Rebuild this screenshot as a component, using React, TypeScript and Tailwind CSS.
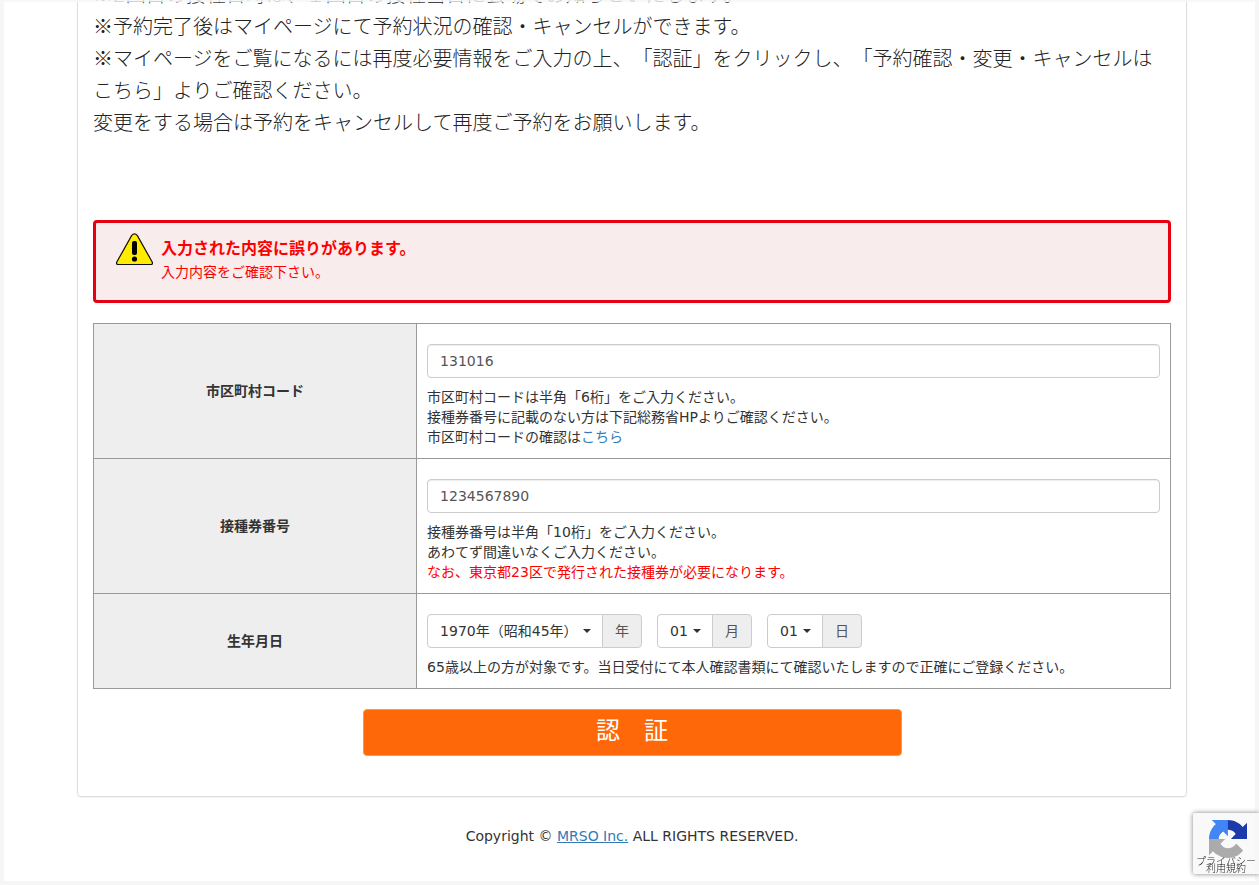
import type { ReactNode } from "react";

const inputClass =
  "mt-[10px] block h-[34px] w-full rounded-[4px] border border-[#ccc] bg-white px-3 text-[#555] shadow-[inset_0_1px_1px_rgba(0,0,0,0.075)] outline-none";

function Row({ label, htmlFor, children }: { label: string; htmlFor: string; children: ReactNode }) {
  return (
    <tr>
      <th scope="row" className="w-[30%] border border-[#999] bg-[#eee] p-[10px] text-center align-middle font-bold">
        <label htmlFor={htmlFor}>{label}</label>
      </th>
      <td className="border border-[#999] p-[10px] align-top">{children}</td>
    </tr>
  );
}

function DateSelect({ id, value, unit, widthClass }: { id: string; value: string; unit: string; widthClass: string }) {
  return (
    <div className="flex h-[34px]">
      <div className={`relative ${widthClass}`}>
        <select
          id={id}
          aria-label={unit}
          className="h-full w-full appearance-none rounded-l-[4px] border border-[#ccc] bg-white pl-3 text-[#333] outline-none"
        >
          <option>{value}</option>
        </select>
        <svg className="pointer-events-none absolute top-[15px] right-[12px] h-1 w-2" viewBox="0 0 8 4" aria-hidden="true">
          <path d="M0 0H8L4 4Z" fill="#333" />
        </svg>
      </div>
      <span className="-ml-px flex w-10 items-center justify-center rounded-r-[4px] border border-[#ccc] bg-[#eee] text-[#555]">
        {unit}
      </span>
    </div>
  );
}

function WarningIcon() {
  return (
    <svg className="h-[33px] w-[39px] shrink-0" viewBox="0 0 39 33" aria-hidden="true">
      <path
        d="M16.6 2.6Q19.5 -0.8 22.4 2.6L37.3 29.2Q38 31.5 35.9 31.5H3.1Q1 31.5 1.7 29.2Z"
        fill="#ffec00"
        stroke="#111"
        strokeWidth="1.2"
      />
      <rect x="17" y="8" width="5" height="14" rx="2" fill="#000" />
      <circle cx="19.5" cy="26" r="2.6" fill="#000" />
    </svg>
  );
}

function RecaptchaBadge() {
  return (
    <aside className="fixed right-0 bottom-[11px] h-[61px] w-[66px] overflow-hidden rounded-l-[2px] bg-[#f9f9f9] shadow-[0_0_5px_#808080]">
      <svg className="mt-[7px] ml-4 h-[38px] w-[38px]" viewBox="0 0 64 64" aria-hidden="true">
        <path
          d="M64 31.955l-.033-1.37V4.687l-7.16 7.16C50.948 4.674 42.033.093 32.05.093c-10.4 0-19.622 4.96-25.458 12.64l11.736 11.86a15.55 15.55 0 0 1 4.754-5.334c2.05-1.6 4.952-2.906 8.968-2.906.485 0 .86.057 1.135.163 4.976.393 9.288 3.14 11.828 7.124l-8.307 8.307L64 31.953"
          fill="#1c3aa9"
        />
        <path
          d="M31.862.094l-1.37.033H4.594l7.16 7.16C4.58 13.147 0 22.06 0 32.046c0 10.4 4.96 19.622 12.64 25.458L24.5 45.768a15.55 15.55 0 0 1-5.334-4.754c-1.6-2.05-2.906-4.952-2.906-8.968 0-.485.057-.86.163-1.135.393-4.976 3.14-9.288 7.124-11.828l8.307 8.307L31.86.095"
          fill="#4285f4"
        />
        <path
          d="M.001 32.045l.033 1.37v25.898l7.16-7.16c5.86 7.173 14.774 11.754 24.76 11.754 10.4 0 19.622-4.96 25.458-12.64l-11.736-11.86a15.55 15.55 0 0 1-4.754 5.334c-2.05 1.6-4.952 2.906-8.968 2.906-.485 0-.86-.057-1.135-.163-4.976-.393-9.288-3.14-11.828-7.124l8.307-8.307c-10.522.04-22.4.066-27.295-.005"
          fill="#ababab"
        />
      </svg>
      <p className="flex flex-col items-center text-[10px] leading-[7px] font-light whitespace-nowrap text-[#222]">
        <a href="#privacy">プライバシー</a>
        <a href="#terms">利用規約</a>
      </p>
      <div className="absolute inset-y-0 right-0 w-1 bg-[#f6f6f6]/80" />
    </aside>
  );
}

export default function App() {
  return (
    <div className="min-h-screen bg-[#f6f6f6] px-1 pb-1 font-['DejaVu_Sans','Noto_Sans_CJK_JP',sans-serif] text-[14px] leading-[20px] text-[#333] [text-spacing-trim:space-all]">
      <div className="fixed inset-x-0 top-0 z-10 h-[2px] bg-[#f6f6f6]/80" />
      <div className="flow-root bg-white pr-[68px] pl-[73px]">
        <main className="-mt-[25px] rounded-[4px] border border-[#ddd] px-[15px] pt-[2px] pb-10 shadow-[0_1px_1px_rgba(0,0,0,0.05)]">
          <div className="font-['Noto_Sans_CJK_JP',sans-serif] text-[20px] leading-[32px] font-light text-[#222]">
            <p className="text-[#444]">
              ※<span className="font-['DejaVu_Sans',sans-serif] leading-none">2</span>
              回目の接種日時は、１回目の接種当日に会場でお知らせいたします。
            </p>
            <p>※予約完了後はマイページにて予約状況の確認・キャンセルができます。</p>
            <p>※マイページをご覧になるには再度必要情報をご入力の上、「認証」をクリックし、「予約確認・変更・キャンセルはこちら」よりご確認ください。</p>
            <p>変更をする場合は予約をキャンセルして再度ご予約をお願いします。</p>
          </div>

          <div
            role="alert"
            className="mt-[82px] flex gap-[7px] rounded-[4px] border-[3px] border-[#e60012] bg-[#f9ecec] px-[19px] pt-[10px] pb-[17px] text-[#f00]"
          >
            <WarningIcon />
            <div className="pt-1">
              <p className="text-[16px] leading-[24px] font-bold">入力された内容に誤りがあります。</p>
              <p className="leading-[22px]">入力内容をご確認下さい。</p>
            </div>
          </div>

          <form onSubmit={(e) => e.preventDefault()}>
            <table className="mt-5 w-full table-fixed border-collapse">
              <tbody>
                <Row label="市区町村コード" htmlFor="city">
                  <input id="city" type="text" defaultValue="131016" className={inputClass} />
                  <p className="mt-[9px] mb-px">
                    市区町村コードは半角「6桁」をご入力ください。
                    <br />
                    接種券番号に記載のない方は下記総務省HPよりご確認ください。
                    <br />
                    市区町村コードの確認は
                    <a href="#code" className="text-[#337ab7]">
                      こちら
                    </a>
                  </p>
                </Row>
                <Row label="接種券番号" htmlFor="ticket">
                  <input id="ticket" type="text" defaultValue="1234567890" className={inputClass} />
                  <p className="mt-[9px] mb-px">
                    接種券番号は半角「10桁」をご入力ください。
                    <br />
                    あわてず間違いなくご入力ください。
                    <br />
                    <span className="text-[#f00]">なお、東京都23区で発行された接種券が必要になります。</span>
                  </p>
                </Row>
                <Row label="生年月日" htmlFor="year">
                  <div className="mt-[10px] flex flex-wrap gap-[15px]">
                    <DateSelect id="year" value="1970年（昭和45年）" unit="年" widthClass="w-[176px]" />
                    <DateSelect id="month" value="01" unit="月" widthClass="w-[56px]" />
                    <DateSelect id="day" value="01" unit="日" widthClass="w-[56px]" />
                  </div>
                  <p className="mt-[9px] mb-px">
                    65歳以上の方が対象です。当日受付にて本人確認書類にて確認いたしますので正確にご登録ください。
                  </p>
                </Row>
              </tbody>
            </table>
            <button
              type="submit"
              className="mx-auto mt-5 block h-[47px] w-1/2 rounded-[4px] border border-[#eea236] bg-[#ff6808] pb-1 text-[24px] leading-[32px] text-white"
            >
              認　証
            </button>
          </form>
        </main>
        <footer className="pt-[29px] pb-[35px] text-center">
          Copyright ©{" "}
          <a href="#mrso" className="text-[#337ab7] underline">
            MRSO Inc.
          </a>{" "}
          ALL RIGHTS RESERVED.
        </footer>
      </div>
      <RecaptchaBadge />
    </div>
  );
}
